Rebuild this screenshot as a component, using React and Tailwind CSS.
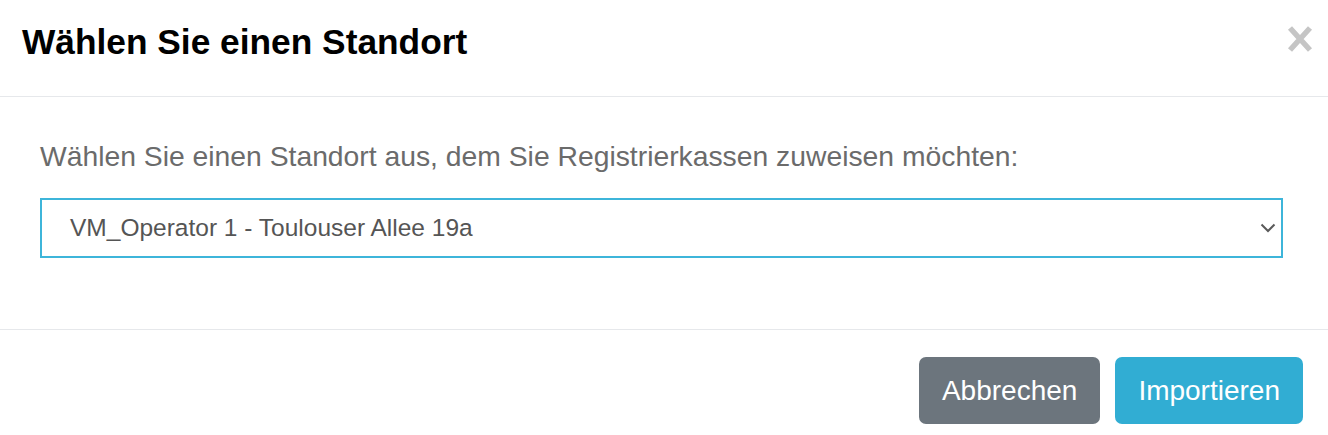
import React from 'react';

const LOCATION = 'VM_Operator 1 - Toulouser Allee 19a';

const CloseIcon = () => (
  <svg width="26" height="28" viewBox="0 0 26 28" aria-hidden="true">
    <path d="M3 3 L23 25 M23 3 L3 25" stroke="#c5c5c5" strokeWidth="5.5" strokeLinecap="butt" />
  </svg>
);

const Chevron = () => (
  <svg width="16" height="10" viewBox="0 0 16 10" aria-hidden="true">
    <path d="M1.5 1.5 L8 8 L14.5 1.5" fill="none" stroke="#5a5a5a" strokeWidth="2" />
  </svg>
);

export default function App() {
  return (
    <div className="w-[1328px] h-[435px] overflow-hidden bg-white font-['Liberation_Sans',Arial,sans-serif]">
      {/* Header */}
      <div className="h-[97px] flex items-start justify-between pl-[22px] pr-[14px] pt-[21px] border-b border-[#e6e8eb]">
        <h2 className="text-[35.3px] leading-[42px] font-bold text-black">Wählen Sie einen Standort</h2>
        <button className="mt-[3px] w-[28px] h-[30px] flex items-center justify-center">
          <CloseIcon />
        </button>
      </div>

      {/* Body */}
      <div className="pl-[40px] pr-[45px] pt-[38px] h-[233px] border-b border-[#e6e8eb]">
        <p className="text-[28.3px] leading-[42px] text-[#6b6b6b]">
          Wählen Sie einen Standort aus, dem Sie Registrierkassen zuweisen möchten:
        </p>
        <div className="mt-[21px] h-[60px] border-2 border-[#3db5da] flex items-center justify-between pl-[28px] pr-[5px]">
          <span className="text-[24.5px] text-[#555]">{LOCATION}</span>
          <Chevron />
        </div>
      </div>

      {/* Footer */}
      <div className="flex justify-end gap-[15px] pt-[27px] pr-[25px]">
        <button className="h-[67px] px-[23px] rounded-[7px] bg-[#6c757d] text-white text-[28px]">
          Abbrechen
        </button>
        <button className="h-[67px] px-[23px] rounded-[7px] bg-[#31add3] text-white text-[28px]">
          Importieren
        </button>
      </div>
    </div>
  );
}
